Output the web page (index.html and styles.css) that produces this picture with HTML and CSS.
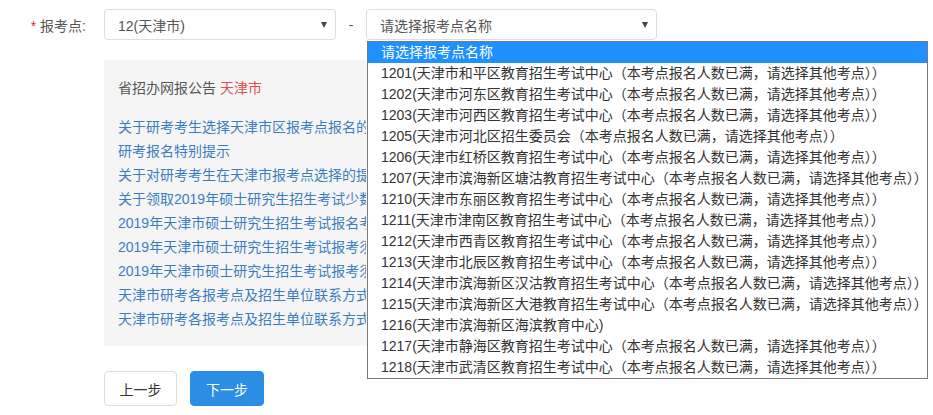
FILE: index.html
```html
<!DOCTYPE html>
<html lang="zh-CN">
<head>
<meta charset="utf-8">
<title>报考点</title>
<link rel="stylesheet" href="styles.css">
</head>
<body>
<div class="page">
  <div class="form-row">
    <label class="label"><span class="req">*</span> 报考点:</label>
    <div class="select select-prov">
      <span class="select-text">12(天津市)</span>
      <span class="arrow"></span>
    </div>
    <span class="dash">-</span>
    <div class="select select-site">
      <span class="select-text">请选择报考点名称</span>
      <span class="arrow"></span>
      <ul class="dropdown">
        <li class="option active">请选择报考点名称</li>
        <li class="option">1201(天津市和平区教育招生考试中心（本考点报名人数已满，请选择其他考点））</li>
        <li class="option">1202(天津市河东区教育招生考试中心（本考点报名人数已满，请选择其他考点））</li>
        <li class="option">1203(天津市河西区教育招生考试中心（本考点报名人数已满，请选择其他考点））</li>
        <li class="option">1205(天津市河北区招生委员会（本考点报名人数已满，请选择其他考点））</li>
        <li class="option">1206(天津市红桥区教育招生考试中心（本考点报名人数已满，请选择其他考点））</li>
        <li class="option">1207(天津市滨海新区塘沽教育招生考试中心（本考点报名人数已满，请选择其他考点））</li>
        <li class="option">1210(天津市东丽区教育招生考试中心（本考点报名人数已满，请选择其他考点））</li>
        <li class="option">1211(天津市津南区教育招生考试中心（本考点报名人数已满，请选择其他考点））</li>
        <li class="option">1212(天津市西青区教育招生考试中心（本考点报名人数已满，请选择其他考点））</li>
        <li class="option">1213(天津市北辰区教育招生考试中心（本考点报名人数已满，请选择其他考点））</li>
        <li class="option">1214(天津市滨海新区汉沽教育招生考试中心（本考点报名人数已满，请选择其他考点））</li>
        <li class="option">1215(天津市滨海新区大港教育招生考试中心（本考点报名人数已满，请选择其他考点））</li>
        <li class="option">1216(天津市滨海新区海滨教育中心)</li>
        <li class="option">1217(天津市静海区教育招生考试中心（本考点报名人数已满，请选择其他考点））</li>
        <li class="option">1218(天津市武清区教育招生考试中心（本考点报名人数已满，请选择其他考点））</li>
      </ul>
    </div>
  </div>

  <div class="notice">
    <div class="notice-title">省招办网报公告 <span class="city">天津市</span></div>
    <ul class="links">
      <li><a class="link" href="#">关于研考考生选择天津市区报考点报名的</a></li>
      <li><a class="link" href="#">研考报名特别提示</a></li>
      <li><a class="link" href="#">关于对研考考生在天津市报考点选择的提</a></li>
      <li><a class="link" href="#">关于领取2019年硕士研究生招生考试少数</a></li>
      <li><a class="link" href="#">2019年天津市硕士研究生招生考试报名考</a></li>
      <li><a class="link" href="#">2019年天津市硕士研究生招生考试报考须</a></li>
      <li><a class="link" href="#">2019年天津市硕士研究生招生考试报考须</a></li>
      <li><a class="link" href="#">天津市研考各报考点及招生单位联系方式</a></li>
      <li><a class="link" href="#">天津市研考各报考点及招生单位联系方式</a></li>
    </ul>
  </div>

  <div class="actions">
    <button class="btn btn-default" type="button">上一步</button>
    <button class="btn btn-primary" type="button">下一步</button>
  </div>
</div>
</body>
</html>
```

FILE: styles.css
```css
* {
  box-sizing: border-box;
}

html, body {
  margin: 0;
  padding: 0;
  background: #ffffff;
}

body {
  font-family: "Liberation Sans", "Noto Sans CJK SC", sans-serif;
  font-size: 14px;
  color: #555555;
}

.page {
  padding-top: 9px;
}

.form-row {
  display: flex;
  align-items: center;
  height: 31px;
}

.label {
  width: 104px;
  padding-right: 18px;
  text-align: right;
  font-size: 14px;
  color: #555555;
}

.req {
  color: #c9302c;
}

.select {
  position: relative;
  height: 31px;
  border: 1px solid #dddddd;
  border-radius: 4px;
  background: #ffffff;
  display: flex;
  align-items: center;
  padding-left: 13px;
  color: #555555;
}

.select-prov {
  width: 232px;
}

.select-site {
  width: 291px;
}

.select-text {
  flex: 1;
}

.arrow {
  width: 0;
  height: 0;
  border-left: 3.5px solid transparent;
  border-right: 3.5px solid transparent;
  border-top: 6px solid #444444;
  margin-right: 8px;
}

.dash {
  width: 30px;
  text-align: center;
  color: #555555;
}

.dropdown {
  position: absolute;
  top: 31px;
  left: 0;
  width: 561px;
  margin: 0;
  padding: 0;
  list-style: none;
  background: #ffffff;
  border: 1px solid #7a7a7a;
  z-index: 10;
}

.option {
  height: 21px;
  line-height: 21px;
  padding-left: 13px;
  color: #333333;
  white-space: nowrap;
  overflow: hidden;
}

.option.active {
  background: #1e90ff;
  color: #ffffff;
}

.notice {
  margin: 20px 0 0 104px;
  width: 540px;
  background: #f5f5f5;
  padding: 16px 14px 15px;
}

.notice-title {
  line-height: 24px;
  color: #555555;
  margin-bottom: 15px;
}

.city {
  color: #d9534f;
}

.links {
  margin: 0;
  padding: 0;
  list-style: none;
  width: 248px;
  overflow: hidden;
}

.links li {
  height: 24px;
  line-height: 24px;
  white-space: nowrap;
  overflow: hidden;
}

.link {
  color: #3b7ec0;
  text-decoration: none;
}

.actions {
  display: flex;
  gap: 13px;
  margin: 25px 0 0 104px;
}

.btn {
  height: 35px;
  border-radius: 4px;
  font-family: "Liberation Sans", "Noto Sans CJK SC", sans-serif;
  font-size: 14px;
  padding: 0;
  cursor: pointer;
}

.btn-default {
  width: 73px;
  background: #ffffff;
  border: 1px solid #dddddd;
  color: #333333;
}

.btn-primary {
  width: 74px;
  background: #2b8de3;
  border: 1px solid #2b8de3;
  color: #ffffff;
}
```
